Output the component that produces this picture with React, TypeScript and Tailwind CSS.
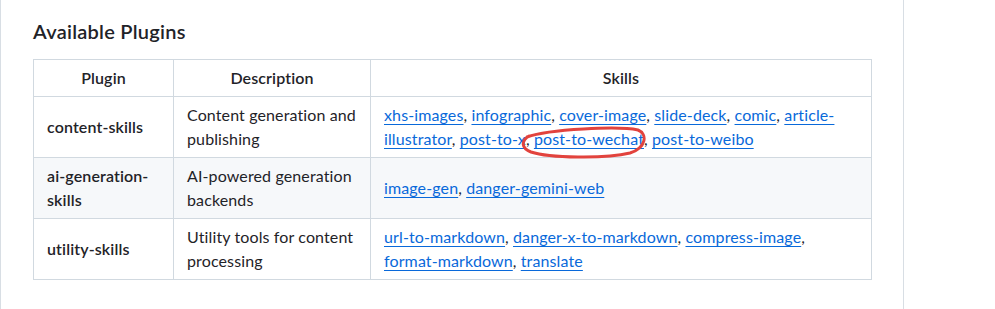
const skills = {
  content: ["xhs-images", "infographic", "cover-image", "slide-deck", "comic", "article-illustrator", "post-to-x", "post-to-wechat", "post-to-weibo"],
  ai: ["image-gen", "danger-gemini-web"],
  utility: ["url-to-markdown", "danger-x-to-markdown", "compress-image", "format-markdown", "translate"],
};

const rows = [
  { name: "content-skills", desc: "Content generation and publishing", skills: skills.content },
  { name: "ai-generation-skills", desc: "AI-powered generation backends", skills: skills.ai },
  { name: "utility-skills", desc: "Utility tools for content processing", skills: skills.utility },
];

function SkillLinks({ items }: { items: string[] }) {
  return (
    <>
      {items.map((s, i) => (
        <span key={s}>
          <a
            href="#"
            className={
              s === "article-illustrator"
                ? "text-[#0969da] underline underline-offset-[3px] decoration-1"
                : "text-[#0969da] underline underline-offset-[3px] decoration-1 whitespace-nowrap"
            }
          >
            {s}
          </a>
          {i < items.length - 1 ? ", " : ""}
        </span>
      ))}
    </>
  );
}

export default function App() {
  return (
    <div className="w-[995px] h-[309px] bg-white" style={{ fontFamily: 'Lato, "Liberation Sans", sans-serif' }}>
      <div className="w-[904px] h-full border-l border-r border-[#d8dee4] pl-8 pt-[19px] text-[#1f2328]">
        <h3 className="text-[20px] leading-[25px] font-semibold tracking-[0.25px] mb-[15px]">Available Plugins</h3>
        <div className="relative w-[838px]">
          <table className="w-[838px] table-fixed border-collapse text-[16px] leading-6 tracking-[0.12px]">
            <colgroup>
              <col className="w-[140px]" />
              <col className="w-[197px]" />
              <col className="w-[501px]" />
            </colgroup>
            <thead>
              <tr>
                <th className="border border-[#d1d9e0] px-[13px] py-[6px] font-semibold text-center">Plugin</th>
                <th className="border border-[#d1d9e0] px-[13px] py-[6px] font-semibold text-center">Description</th>
                <th className="border border-[#d1d9e0] px-[13px] py-[6px] font-semibold text-center">Skills</th>
              </tr>
            </thead>
            <tbody>
              {rows.map((r, i) => (
                <tr key={r.name} className={i % 2 === 1 ? "bg-[#f6f8fa]" : "bg-white"}>
                  <td className="border border-[#d1d9e0] px-[13px] py-[6px] font-semibold">{r.name}</td>
                  <td className="border border-[#d1d9e0] px-[13px] py-[6px]">{r.desc}</td>
                  <td className="border border-[#d1d9e0] px-[13px] py-[6px]">
                    <SkillLinks items={r.skills} />
                  </td>
                </tr>
              ))}
            </tbody>
          </table>
          {/* hand-drawn highlight around post-to-wechat */}
          <svg className="absolute left-[486px] top-[67px] pointer-events-none" width="130" height="34" viewBox="0 0 130 34">
            <path
              d="M8 11 C 30 3, 100 0, 119 4 C 129 8, 127 22, 111 27 C 86 33, 30 32, 12 26 C 2 22, 2 15, 10 10"
              fill="none"
              stroke="#e2433d"
              strokeWidth="3"
              strokeLinecap="round"
            />
          </svg>
        </div>
      </div>
    </div>
  );
}
